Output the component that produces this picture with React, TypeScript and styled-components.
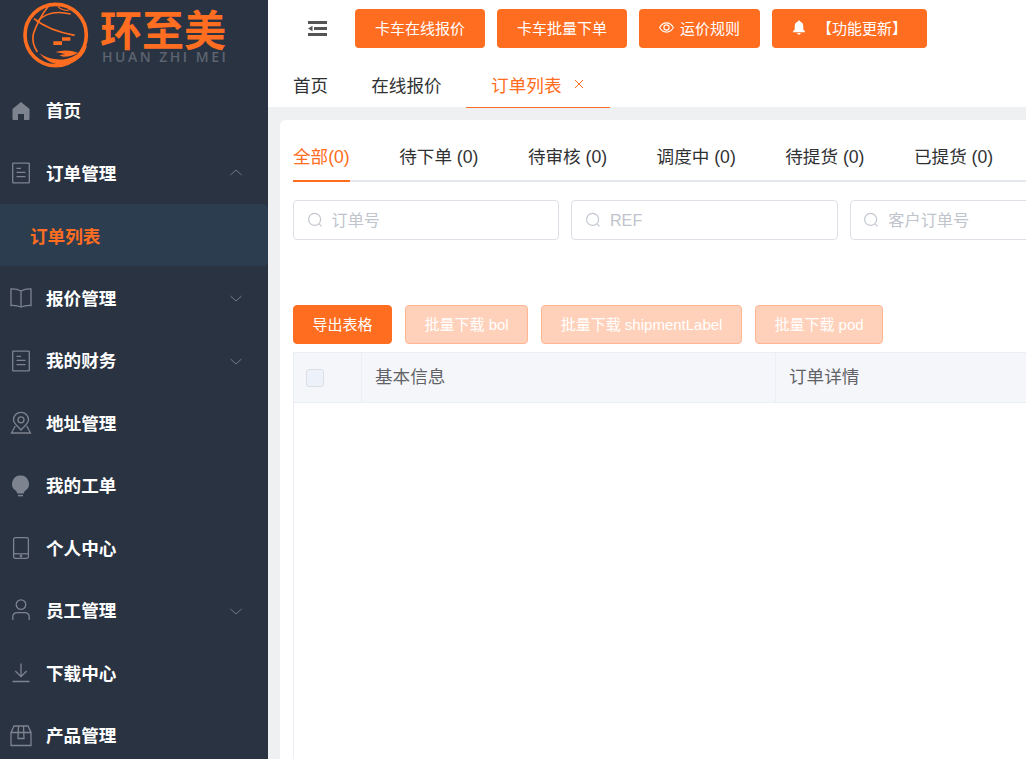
import { ReactNode } from "react";
import styled, { createGlobalStyle } from "styled-components";

const ORANGE = "#ff6d21";

const GlobalStyle = createGlobalStyle`
  * {
    box-sizing: border-box;
  }
  html, body {
    margin: 0;
    height: 100%;
    overflow: hidden;
    background: #fff;
    font-family: "Liberation Sans", "Noto Sans CJK SC", sans-serif;
  }
`;

const IconSvg = ({ children }: { children: ReactNode }) => (
  <svg width="24" height="24" viewBox="0 0 24 24" fill="none" stroke="currentColor" strokeWidth="1.3">
    {children}
  </svg>
);

const LogoMark = () => (
  <svg width="100" height="75" viewBox="0 0 300 225" fill="none" stroke={ORANGE}>
    <circle cx="137" cy="105" r="92" strokeWidth="11" />
    <path d="M72 56 Q116 92 194 106" strokeWidth="5" />
    <path d="M80 66 Q116 26 182 42" strokeWidth="4.5" />
    <path d="M118 14 Q84 58 70 102 Q64 128 82 156" strokeWidth="5" />
    <path d="M144 20 Q158 34 178 30" strokeWidth="3.5" />
    <path d="M130 124 H156 V135 H130 Z M156 112 H181 V122 H156 Z" fill={ORANGE} stroke="none" />
    <path
      d="M88 160 Q128 186 172 176 Q204 168 232 136 Q220 178 180 190 Q124 204 88 160 Z"
      fill={ORANGE}
      stroke="none"
    />
    <path d="M136 156 Q170 146 204 158 Q186 170 160 170 L148 166 L166 162 Z" fill={ORANGE} stroke="none" />
  </svg>
);

const icons: Record<string, ReactNode> = {
  home: (
    <path
      d="M12 3 L3.5 10 V20 Q3.5 21 4.5 21 H9 V15 H15 V21 H19.5 Q20.5 21 20.5 20 V10 Z"
      fill="currentColor"
      stroke="none"
    />
  ),
  doc: (
    <>
      <rect x="3.7" y="2.2" width="16.6" height="19.6" rx="0.6" />
      <path d="M7.5 7.3 H12 M7.5 11.3 H16.5 M7.5 15.7 H16.5" />
    </>
  ),
  book: <path d="M12 5 C9 3.4 5 2.8 2 3 V19.5 C5 19.3 9 19.8 12 21 C15 19.8 19 19.3 22 19.5 V3 C19 2.8 15 3.4 12 5 Z M12 5 V21" />,
  pin: (
    <>
      <path d="M12 19 C8 14.5 4.5 12.4 4.5 8.8 A7.5 7.5 0 0 1 19.5 8.8 C19.5 12.4 16 14.5 12 19 Z" />
      <circle cx="12" cy="8.8" r="3" />
      <path d="M6.3 15 L2.5 22 H21.5 L17.7 15" />
    </>
  ),
  bulb: (
    <>
      <path
        d="M11.5 1.5 A8.3 8.3 0 0 0 6.6 16.6 C7.6 17.4 8 18.5 8.2 19.6 H14.8 C15 18.5 15.4 17.4 16.4 16.6 A8.3 8.3 0 0 0 11.5 1.5 Z"
        fill="currentColor"
        stroke="none"
      />
      <path d="M9 21.6 H14" strokeWidth="1.5" />
    </>
  ),
  tablet: (
    <>
      <rect x="4.6" y="1.6" width="14.8" height="20.8" rx="1.8" />
      <path d="M4.6 17.8 H19.4" />
      <circle cx="12" cy="20.1" r="0.7" fill="currentColor" />
    </>
  ),
  user: (
    <>
      <circle cx="12" cy="5.6" r="4.8" />
      <path d="M3.8 21 V18 C3.8 15 6 13.6 8.5 13.6 H15.5 C18 13.6 20.2 15 20.2 18 V21" />
    </>
  ),
  download: <path d="M12 2.5 V15.5 M6.3 10 L12 15.7 L17.7 10 M3.5 20.5 H20.5" />,
  box: (
    <>
      <path d="M2 8.5 L5 2 H19 L22 8.5 V21.5 H2 Z M2 8.5 H22" />
      <path d="M9.5 2 L9 14.5 H15 L14.5 2" />
    </>
  ),
};

const menu = [
  { label: "首页", icon: "home" },
  { label: "订单管理", icon: "doc", arrow: "up" },
  { label: "订单列表", sub: true },
  { label: "报价管理", icon: "book", arrow: "down" },
  { label: "我的财务", icon: "doc", arrow: "down" },
  { label: "地址管理", icon: "pin" },
  { label: "我的工单", icon: "bulb" },
  { label: "个人中心", icon: "tablet" },
  { label: "员工管理", icon: "user", arrow: "down" },
  { label: "下载中心", icon: "download" },
  { label: "产品管理", icon: "box" },
];

const orderTabs = ["全部(0)", "待下单 (0)", "待审核 (0)", "调度中 (0)", "待提货 (0)", "已提货 (0)"];
const filters = ["订单号", "REF", "客户订单号"];
const batchButtons = ["批量下载 bol", "批量下载 shipmentLabel", "批量下载 pod"];

const App = () => {
  return (
    <StyledPage>
      <GlobalStyle />
      <StyledSidebar>
        <StyledLogo>
          <LogoMark />
          <StyledBrand>
            <StyledBrandName>环至美</StyledBrandName>
            <StyledBrandPinyin>HUAN ZHI MEI</StyledBrandPinyin>
          </StyledBrand>
        </StyledLogo>
        {menu.map((item) =>
          item.sub ? (
            <StyledSubItem key={item.label}>{item.label}</StyledSubItem>
          ) : (
            <StyledMenuItem key={item.label}>
              <StyledMenuIcon>
                <IconSvg>{icons[item.icon as string]}</IconSvg>
              </StyledMenuIcon>
              <StyledMenuLabel>{item.label}</StyledMenuLabel>
              {item.arrow && (
                <svg width="12" height="12" viewBox="0 0 12 12" fill="none" stroke="#727a86" strokeWidth="1">
                  <path d={item.arrow === "up" ? "M.5 8 L6 3 L11.5 8" : "M.5 4 L6 9 L11.5 4"} />
                </svg>
              )}
            </StyledMenuItem>
          ),
        )}
      </StyledSidebar>

      <StyledMain>
        <StyledToolbar>
          <StyledFoldButton>
            <svg width="19" height="15" viewBox="0 0 19 15" fill="#555">
              <path d="M0 0 H19 V3 H0 Z M6 6 H19 V9 H6 Z M0 12 H19 V15 H0 Z M0 7.5 L4.5 4.8 V10.2 Z" />
            </svg>
          </StyledFoldButton>
          <StyledTopButton>卡车在线报价</StyledTopButton>
          <StyledTopButton>卡车批量下单</StyledTopButton>
          <StyledTopButton>
            <StyledButtonIcon $gap={6}>
              <svg width="15" height="15" viewBox="0 0 15 15" fill="none" stroke="#fff" strokeWidth="1.1">
                <path d="M.6 7.5 C2.5 4.3 4.8 2.9 7.5 2.9 C10.2 2.9 12.5 4.3 14.4 7.5 C12.5 10.7 10.2 12.1 7.5 12.1 C4.8 12.1 2.5 10.7 .6 7.5 Z" />
                <circle cx="7.5" cy="7.5" r="2.6" />
              </svg>
            </StyledButtonIcon>
            运价规则
          </StyledTopButton>
          <StyledTopButton>
            <StyledButtonIcon $gap={11}>
              <svg width="14" height="15" viewBox="0 0 14 15" fill="#fff">
                <path d="M7 .5 C7.7 .5 8 1 8 1.6 C10.4 2.2 11.3 4.2 11.3 6.5 V9.5 L13 11.5 V12.2 H1 V11.5 L2.7 9.5 V6.5 C2.7 4.2 3.6 2.2 6 1.6 C6 1 6.3 .5 7 .5 Z M5.2 13 H8.8 C8.6 14 7.9 14.6 7 14.6 C6.1 14.6 5.4 14 5.2 13 Z" />
              </svg>
            </StyledButtonIcon>
            【功能更新】
          </StyledTopButton>
        </StyledToolbar>

        <StyledPageTabs>
          <StyledPageTab>首页</StyledPageTab>
          <StyledPageTab>在线报价</StyledPageTab>
          <StyledActivePageTab>
            订单列表
            <svg width="10" height="10" viewBox="0 0 10 10" stroke={ORANGE} strokeWidth="1">
              <path d="M1 1 L9 9 M9 1 L1 9" />
            </svg>
          </StyledActivePageTab>
        </StyledPageTabs>

        <StyledContent>
          <StyledCard>
            <StyledOrderTabs>
              {orderTabs.map((tab, index) => (
                <StyledOrderTab key={tab} $active={index === 0}>
                  {tab}
                </StyledOrderTab>
              ))}
            </StyledOrderTabs>

            <StyledFilters>
              {filters.map((placeholder) => (
                <StyledSearchBox key={placeholder}>
                  <svg width="16" height="16" viewBox="0 0 16 16" fill="none" stroke="#c3c7cf" strokeWidth="1.2">
                    <circle cx="7.6" cy="7.4" r="6" />
                    <path d="M12 11.8 L14.6 14.4" />
                  </svg>
                  <StyledSearchInput placeholder={placeholder} readOnly />
                </StyledSearchBox>
              ))}
            </StyledFilters>

            <StyledActions>
              <StyledActionButton>导出表格</StyledActionButton>
              {batchButtons.map((label) => (
                <StyledActionButton key={label} $disabled>
                  {label}
                </StyledActionButton>
              ))}
            </StyledActions>

            <StyledTable>
              <StyledTableHead>
                <StyledCheckCell>
                  <StyledCheckbox />
                </StyledCheckCell>
                <StyledHeadCell $width={414}>基本信息</StyledHeadCell>
                <StyledHeadCell>订单详情</StyledHeadCell>
              </StyledTableHead>
            </StyledTable>
          </StyledCard>
        </StyledContent>
      </StyledMain>
    </StyledPage>
  );
};

const StyledPage = styled.div`
  display: flex;
  width: 100vw;
  height: 100vh;
  overflow: hidden;
`;

const StyledSidebar = styled.aside`
  flex: 0 0 268px;
  height: 100%;
  overflow: hidden;
  background-color: #293342;
`;

const StyledLogo = styled.div`
  display: flex;
  height: 79.4px;
  padding-left: 10px;
`;

const StyledBrand = styled.div`
  display: flex;
  flex-direction: column;
  padding-top: 7px;
  margin-left: -10px;
`;

const StyledBrandName = styled.div`
  color: ${ORANGE};
  font-family: "Noto Sans CJK SC", sans-serif;
  font-size: 42px;
  font-weight: 700;
  line-height: 42px;
`;

const StyledBrandPinyin = styled.div`
  padding-left: 2px;
  color: #5c6470;
  font-family: "Open Sans", sans-serif;
  font-size: 14px;
  font-weight: 600;
  line-height: 16px;
  letter-spacing: 2.5px;
  white-space: nowrap;
`;

const StyledMenuItem = styled.div`
  display: flex;
  align-items: center;
  height: 62.5px;
  padding: 0 26px 0 8.5px;
  color: #fff;
  font-family: "Noto Sans CJK SC", sans-serif;
  font-size: 17.6px;
  font-weight: 700;
`;

const StyledMenuIcon = styled.span`
  display: flex;
  margin-right: 13.5px;
  color: #7d848f;
`;

const StyledMenuLabel = styled.span`
  flex: 1;
  padding-bottom: 2px;
`;

const StyledSubItem = styled.div`
  display: flex;
  align-items: center;
  height: 62px;
  margin-bottom: 0.5px;
  padding: 0 0 0 30px;
  border-radius: 0 5px 5px 0;
  background-color: #2d3d50;
  color: ${ORANGE};
  font-family: "Noto Sans CJK SC", sans-serif;
  font-size: 17.6px;
  font-weight: 700;
`;

const StyledMain = styled.main`
  display: flex;
  flex: 1;
  flex-direction: column;
  min-width: 0;
  height: 100%;
  overflow: hidden;
`;

const StyledToolbar = styled.div`
  display: flex;
  gap: 12px;
  height: 63px;
  padding: 9px 0 0 40px;
`;

const StyledFoldButton = styled.div`
  display: flex;
  align-items: center;
  width: 35px;
  height: 39px;
`;

const StyledTopButton = styled.button`
  display: flex;
  align-items: center;
  height: 39px;
  padding: 0 20px 2px;
  border: 0;
  border-radius: 4px;
  background-color: ${ORANGE};
  color: #fff;
  font-family: inherit;
  font-size: 15px;
`;

const StyledButtonIcon = styled.span<{ $gap: number }>`
  display: flex;
  margin-right: ${(props) => props.$gap}px;
`;

const StyledPageTabs = styled.div`
  display: flex;
  flex: 0 0 44px;
  height: 44px;
  padding-left: 3.5px;
  color: #303133;
  font-size: 17.6px;
`;

const StyledPageTab = styled.div`
  display: flex;
  align-items: center;
  height: 44px;
  padding: 0 21.5px 2px;
`;

const StyledActivePageTab = styled.div`
  position: relative;
  z-index: 1;
  display: flex;
  gap: 12.6px;
  align-items: center;
  height: 45px;
  margin-left: 3px;
  padding: 0 26px 2px 25px;
  border-bottom: 1px solid ${ORANGE};
  color: ${ORANGE};
`;

const StyledContent = styled.div`
  flex: 1;
  display: flex;
  min-height: 0;
  padding: 13px 0 0 12px;
  background-color: #eff0f2;
`;

const StyledCard = styled.section`
  display: flex;
  flex: 0 0 1200px;
  flex-direction: column;
  padding: 0 13px;
  border-radius: 6px 6px 0 0;
  background-color: #fff;
`;

const StyledOrderTabs = styled.div`
  display: flex;
  gap: 49.5px;
  height: 62px;
  border-bottom: 2px solid #e4e7ed;
`;

const StyledOrderTab = styled.div<{ $active?: boolean }>`
  height: 62px;
  padding-top: 20px;
  border-bottom: 2px solid ${(props) => (props.$active ? ORANGE : "transparent")};
  color: ${(props) => (props.$active ? ORANGE : "#303133")};
  font-size: 17.6px;
  line-height: 34px;
  white-space: nowrap;
`;

const StyledFilters = styled.div`
  display: flex;
  gap: 12.1px;
  margin-top: 18px;
`;

const StyledSearchBox = styled.label`
  display: flex;
  flex: 0 0 266.3px;
  gap: 9px;
  align-items: center;
  height: 40px;
  padding-left: 12.5px;
  border: 1px solid #dcdfe6;
  border-radius: 4px;
  background-color: #fff;
`;

const StyledSearchInput = styled.input`
  flex: 1;
  min-width: 0;
  padding: 0;
  border: 0;
  outline: 0;
  font-family: inherit;
  font-size: 16.2px;

  &::placeholder {
    color: #c0c4cc;
    opacity: 1;
  }
`;

const StyledActions = styled.div`
  display: flex;
  gap: 13px;
  margin-top: 65px;
`;

const StyledActionButton = styled.button<{ $disabled?: boolean }>`
  height: 39px;
  padding: 0 18.5px 2px;
  border: 1px solid ${(props) => (props.$disabled ? "#ffb691" : ORANGE)};
  border-radius: 4px;
  background-color: ${(props) => (props.$disabled ? "#ffd1ba" : ORANGE)};
  color: #fff;
  font-family: inherit;
  font-size: 15px;
  white-space: nowrap;
`;

const StyledTable = styled.div`
  flex: 1;
  margin-top: 8px;
  border-left: 1px solid #ebeef5;
`;

const StyledTableHead = styled.div`
  display: flex;
  height: 51px;
  border-top: 1px solid #ebeef5;
  border-bottom: 1px solid #ebeef5;
  background-color: #f5f6fa;
`;

const StyledCheckCell = styled.div`
  display: flex;
  flex: 0 0 68px;
  align-items: center;
  padding-left: 12px;
  border-right: 1px solid #ebeef5;
`;

const StyledCheckbox = styled.span`
  width: 18px;
  height: 18px;
  border: 1px solid #dcdfe6;
  border-radius: 3px;
  background-color: #edf1fa;
`;

const StyledHeadCell = styled.div<{ $width?: number }>`
  display: flex;
  flex: ${(props) => (props.$width ? `0 0 ${props.$width}px` : "1")};
  align-items: center;
  padding: 0 0 4px 13px;
  border-right: 1px solid #ebeef5;
  color: #606266;
  font-size: 17.6px;
`;

export default App;
